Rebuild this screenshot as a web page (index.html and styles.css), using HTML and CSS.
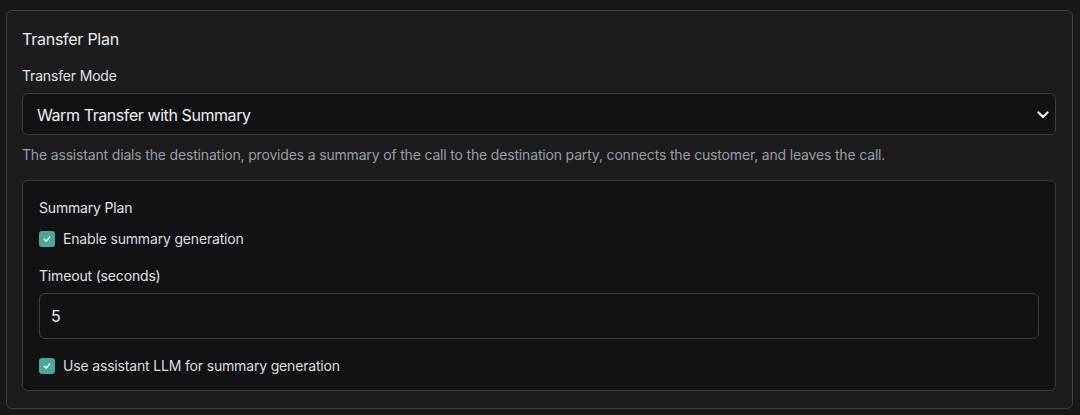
FILE: index.html
```html
<!DOCTYPE html>
<html>
<head>
<meta charset="utf-8">
<link rel="stylesheet" href="styles.css">
</head>
<body>
<div class="card">
  <h2 class="title">Transfer Plan</h2>
  <label class="label">Transfer Mode</label>
  <div class="select">
    <span>Warm Transfer with Summary</span>
    <svg class="chev" width="12" height="8" viewBox="0 0 12 8"><path d="M1.5 1.5 L6 6 L10.5 1.5" fill="none" stroke="#f2f2f2" stroke-width="2.2" stroke-linecap="round" stroke-linejoin="round"/></svg>
  </div>
  <p class="desc">The assistant dials the destination, provides a summary of the call to the destination party, connects the customer, and leaves the call.</p>
  <div class="inner">
    <div class="sub">Summary Plan</div>
    <div class="check-row">
      <span class="box"><svg width="10" height="10" viewBox="0 0 10 10"><path d="M2.3 5.3 L4.2 7.2 L7.8 2.8" fill="none" stroke="#fff" stroke-width="1.3" stroke-linecap="round" stroke-linejoin="round"/></svg></span>
      <span>Enable summary generation</span>
    </div>
    <label class="label l2">Timeout (seconds)</label>
    <div class="input">5</div>
    <div class="check-row last">
      <span class="box"><svg width="10" height="10" viewBox="0 0 10 10"><path d="M2.3 5.3 L4.2 7.2 L7.8 2.8" fill="none" stroke="#fff" stroke-width="1.3" stroke-linecap="round" stroke-linejoin="round"/></svg></span>
      <span>Use assistant LLM for summary generation</span>
    </div>
  </div>
</div>
</body>
</html>
```
FILE: styles.css
```css
* { box-sizing: border-box; }
html, body { margin: 0; padding: 0; background: #18181b; }
body {
  font-family: Inter, "Noto Sans", sans-serif;
  color: #e5e5e7;
  padding: 10px 8px 0 6px;
  letter-spacing: -0.17px;
}
.card {
  width: 1067px;
  height: 399px;
  background: #1c1c1f;
  border: 1px solid #3b404b;
  border-radius: 6px;
  padding: 18px 16px 0 15px;
}
.title {
  margin: 0;
  font-size: 16px;
  font-weight: 400;
  line-height: 20px;
  color: #ececee;
  letter-spacing: -0.25px;
}
.label {
  display: block;
  margin-top: 18px;
  font-size: 14px;
  line-height: 18px;
  color: #e1e1e4;
}
.select {
  margin-top: 8px;
  height: 42px;
  background: #121214;
  border: 1px solid #383d48;
  border-radius: 6px;
  display: flex;
  align-items: center;
  justify-content: space-between;
  padding: 1px 6px 0 14px;
  font-size: 16px;
  color: #f0f0f2;
  letter-spacing: -0.42px;
}
.chev { display: block; }
.desc {
  margin: 11px 0 0 0;
  font-size: 14px;
  line-height: 18px;
  color: #9b9ca3;
}
.inner {
  margin-top: 16px;
  height: 211px;
  background: #121214;
  border: 1px solid #363b46;
  border-radius: 6px;
  padding: 18px 16px 0 16px;
}
.sub {
  font-size: 14px;
  line-height: 18px;
  color: #e3e3e6;
}
.check-row {
  margin-top: 13px;
  display: flex;
  align-items: center;
  gap: 8px;
  font-size: 14px;
  line-height: 18px;
  color: #dcdce0;
}
.box {
  width: 16px;
  height: 16px;
  border-radius: 3px;
  background: #4fa597;
  display: flex;
  align-items: center;
  justify-content: center;
}
.l2 { margin-top: 19px; }
.input {
  margin-top: 8px;
  height: 46px;
  background: #121214;
  border: 1px solid #383d48;
  border-radius: 6px;
  display: flex;
  align-items: center;
  padding: 0 11px;
  font-size: 16px;
  color: #f0f0f2;
}
.last { margin-top: 18px; }
```
